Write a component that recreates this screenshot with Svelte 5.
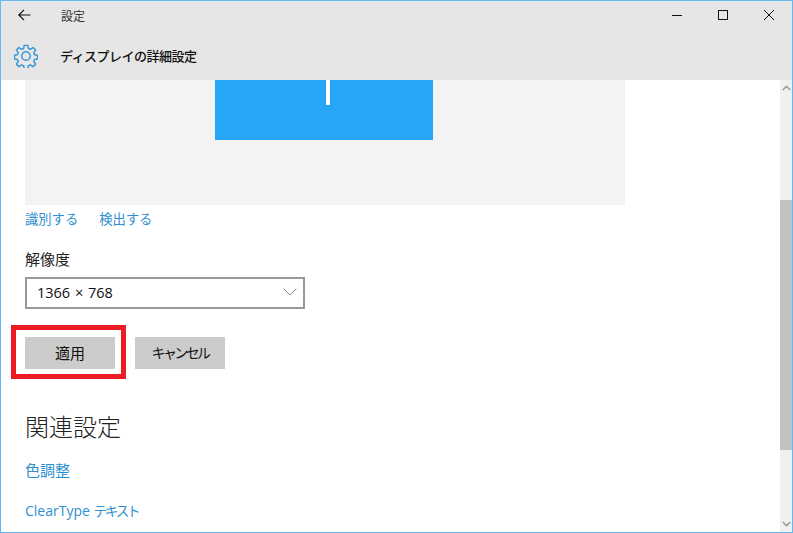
<script>
    const links = ['識別する', '検出する'];
</script>

<div class="window">
    <div class="titlebar">
        <div class="title-left">
            <svg class="back" width="16" height="16" viewBox="0 0 16 16">
                <path d="M13.5 8H2M7 2.8 1.8 8 7 13.2" fill="none" stroke="#111" stroke-width="1.2" />
            </svg>
            <span class="app-name">設定</span>
        </div>
        <div class="controls">
            <span class="control">
                <svg width="12" height="12" viewBox="0 0 12 12"><path d="M1 6.5h10" stroke="#111" stroke-width="1" /></svg>
            </span>
            <span class="control">
                <svg width="12" height="12" viewBox="0 0 12 12"><rect x="1.5" y="1.5" width="9" height="9" fill="none" stroke="#111" stroke-width="1" /></svg>
            </span>
            <span class="control">
                <svg width="12" height="12" viewBox="0 0 12 12"><path d="M1 1l10 10M11 1 1 11" stroke="#111" stroke-width="1" /></svg>
            </span>
        </div>
    </div>

    <header class="page-header">
        <svg class="gear" width="24" height="24" viewBox="0 0 26 26">
            <path
                d="M11 1.5h4l.6 3.4 2.2.9 2.8-2 2.8 2.8-2 2.8.9 2.2 3.2.6v4l-3.2.6-.9 2.2 2 2.8-2.8 2.8-2.8-2-2.2.9-.6 3.2h-4l-.6-3.2-2.2-.9-2.8 2-2.8-2.8 2-2.8-.9-2.2-3.2-.6v-4l3.2-.6.9-2.2-2-2.8 2.8-2.8 2.8 2 2.2-.9z"
                fill="none" stroke="#3a96d4" stroke-width="1.6" stroke-linejoin="round" />
            <circle cx="13" cy="13" r="4.6" fill="none" stroke="#3a96d4" stroke-width="1.6" />
        </svg>
        <h1>ディスプレイの詳細設定</h1>
    </header>

    <div class="body">
        <main class="content">
            <div class="preview">
                <div class="monitor"><span class="tick"></span></div>
            </div>

            <div class="link-row">
                {#each links as link}
                    <span class="link">{link}</span>
                {/each}
            </div>

            <div class="field-label">解像度</div>
            <div class="select">
                <span class="value">1366 × 768</span>
                <svg width="14" height="8" viewBox="0 0 14 8"><path d="M.7.7 7 7l6.3-6.3" fill="none" stroke="#888" stroke-width="1" /></svg>
            </div>

            <div class="buttons">
                <div class="apply-wrap">
                    <button class="apply">適用</button>
                    <span class="highlight"></span>
                </div>
                <button class="cancel">キャンセル</button>
            </div>

            <h2>関連設定</h2>
            <div class="link related kanji">色調整</div>
            <div class="link related latin">ClearType <span class="kana">テキスト</span></div>
        </main>

        <div class="scrollbar">
            <svg width="9" height="6" viewBox="0 0 9 6"><path d="M.7 5 4.5 1.4 8.3 5" fill="none" stroke="#9a9a9a" stroke-width="1.5" /></svg>
            <div class="track"><div class="thumb"></div></div>
            <svg width="9" height="6" viewBox="0 0 9 6"><path d="M.7 1 4.5 4.6 8.3 1" fill="none" stroke="#9a9a9a" stroke-width="1.5" /></svg>
        </div>
    </div>
</div>

<style>
    :global(body) {
        margin: 0;
        background: #fff;
    }

    .window {
        box-sizing: border-box;
        width: 793px;
        height: 533px;
        border: 1px solid #64b9f2;
        display: flex;
        flex-direction: column;
        overflow: hidden;
        font-family: "Noto Sans CJK JP", "Open Sans", sans-serif;
        color: #111;
    }

    .titlebar {
        height: 31px;
        padding-bottom: 3px;
        box-sizing: border-box;
        flex: none;
        background: #e6e6e6;
        display: flex;
        justify-content: space-between;
        align-items: center;
    }

    .title-left {
        display: flex;
        align-items: center;
    }

    .back {
        margin-left: 16px;
    }

    .app-name {
        margin-left: 28px;
        font-size: 12px;
        color: #333;
    }

    .controls {
        display: flex;
    }

    .control {
        width: 46px;
        display: flex;
        justify-content: center;
        align-items: center;
    }

    .page-header {
        height: 48px;
        flex: none;
        background: #e6e6e6;
        display: flex;
        align-items: center;
        padding: 0 0 1px 13px;
        box-sizing: border-box;
    }

    h1 {
        margin: 0 0 1px 22px;
        font-size: 13px;
        letter-spacing: -0.5px;
        font-weight: 500;
        color: #111;
    }

    .body {
        flex: 1;
        display: flex;
        min-height: 0;
    }

    .content {
        flex: 1;
        padding-left: 24px;
        min-width: 0;
    }

    .preview {
        width: 600px;
        height: 125px;
        background: #f3f3f3;
        display: flex;
        justify-content: center;
    }

    .monitor {
        width: 218px;
        height: 60px;
        margin-left: -2px;
        background: #27a6f5;
        display: flex;
        justify-content: center;
    }

    .tick {
        width: 4px;
        height: 25px;
        margin-left: 8px;
        background: #fff;
    }

    .link-row {
        display: flex;
        gap: 21px;
        margin-top: 4px;
        height: 20px;
        line-height: 20px;
    }

    .link {
        font-size: 13.3px;
        color: #2f8fd0;
    }

    .field-label {
        margin-top: 20px;
        font-size: 15px;
        line-height: 20px;
        color: #222;
    }

    .select {
        box-sizing: border-box;
        width: 280px;
        height: 32px;
        margin-top: 8px;
        border: 2px solid #999;
        display: flex;
        justify-content: space-between;
        align-items: center;
        padding: 0 6px 2px 10px;
        color: #111;
    }

    .value {
        font-family: "Open Sans", sans-serif;
        font-size: 14.5px;
        word-spacing: 1px;
    }

    .buttons {
        display: flex;
        gap: 20px;
        margin-top: 28px;
    }

    .apply-wrap {
        position: relative;
        display: flex;
    }

    button {
        width: 90px;
        height: 32px;
        border: 0;
        padding: 0 0 2px;
        background: #ccc;
        font: inherit;
        color: #111;
    }

    .apply {
        font-size: 15px;
    }

    .cancel {
        font-size: 14px;
        letter-spacing: -2.6px;
    }

    .highlight {
        position: absolute;
        left: -14px;
        top: -12px;
        width: 115px;
        height: 54px;
        box-sizing: border-box;
        border: 5px solid #ed1c24;
    }

    h2 {
        margin: 40px 0 0;
        font-size: 24px;
        font-weight: 300;
        line-height: 34px;
        color: #222;
    }

    .related {
        line-height: 20px;
    }

    .kanji {
        margin-top: 17px;
        font-size: 15px;
    }

    .latin {
        margin-top: 20px;
        font-family: "Open Sans", "Noto Sans CJK JP", sans-serif;
        font-size: 14px;
    }

    .kana {
        font-family: "Noto Sans CJK JP", sans-serif;
        font-size: 13.5px;
        letter-spacing: -2.2px;
    }

    .scrollbar {
        width: 12px;
        flex: none;
        background: #f0f0f0;
        display: flex;
        flex-direction: column;
        align-items: center;
        padding: 5px 0;
        box-sizing: border-box;
    }

    .track {
        flex: 1;
        width: 100%;
        margin: 2px 0;
    }

    .thumb {
        height: 250px;
        margin-top: 107px;
        background: #c2c2c2;
    }
</style>
